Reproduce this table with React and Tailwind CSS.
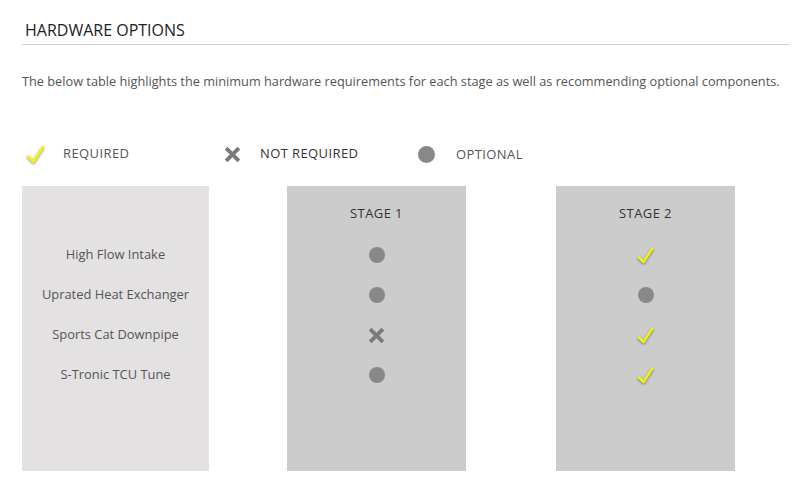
import { useState } from "react";

// yellow tick with a soft grey shadow, like the original sprite
function Check({ size = 18 }) {
  return (
    <svg width={size} height={size} viewBox="0 0 20 20" className="drop-shadow-[0_1px_1px_rgba(0,0,0,0.45)]">
      <polyline points="3,12 8,17 17,3" fill="none" stroke="#f4f40a" strokeWidth="2.6" strokeLinecap="round" strokeLinejoin="round" />
    </svg>
  );
}

function Cross({ size = 16 }) {
  return (
    <svg width={size} height={size} viewBox="0 0 16 16">
      <path d="M2 2 L14 14 M14 2 L2 14" stroke="#7a7a7a" strokeWidth="3.6" strokeLinecap="butt" />
    </svg>
  );
}

function Dot() {
  return <div className="w-4 h-4 rounded-full bg-[#888888]" />;
}

const ITEMS = [
  { name: "High Flow Intake", s1: "opt", s2: "req" },
  { name: "Uprated Heat Exchanger", s1: "opt", s2: "opt" },
  { name: "Sports Cat Downpipe", s1: "no", s2: "req" },
  { name: "S-Tronic TCU Tune", s1: "opt", s2: "req" },
];

function Mark({ kind }) {
  if (kind === "req") return <Check size={19} />;
  if (kind === "no") return <Cross size={17} />;
  return <Dot />;
}

function Column({ title, className, children }) {
  return (
    <div className={"flex flex-col items-center pt-[19px] h-[285px] " + className}>
      <div className="h-4 mb-[14px] text-[13px] leading-4 tracking-[0.4px] text-[#333]">{title}</div>
      {children}
    </div>
  );
}

export default function App() {
  const [items] = useState(ITEMS);

  return (
    <div className="w-[812px] h-[503px] bg-white font-['Open_Sans',sans-serif] px-[22px] pt-[20px]">
      <div className="w-[768px] border-b border-[#cfcfcf] pb-[4px] pl-[3px]">
        <h2 className="text-[16px] leading-5 text-[#222]">HARDWARE OPTIONS</h2>
      </div>

      <p className="mt-[28px] text-[12.75px] leading-4 text-[#555]">
        The below table highlights the minimum hardware requirements for each stage as well as recommending optional components.
      </p>

      <div className="mt-[55px] flex items-center h-5 text-[13px] tracking-[0.4px] text-[#555]">
        <div className="w-[41px] pl-[3px] flex items-center">
          <Check size={21} />
        </div>
        <span className="w-[159px]">REQUIRED</span>
        <div className="w-[38px] flex items-center pl-[2px]">
          <Cross size={17} />
        </div>
        <span className="w-[156px] text-[#333]">NOT REQUIRED</span>
        <div className="w-[40px] pl-[2px] flex items-center">
          <div className="w-[17px] h-[17px] rounded-full bg-[#888888]" />
        </div>
        <span className="pt-[2px]">OPTIONAL</span>
      </div>

      <div className="mt-[22px] flex">
        <Column title="" className="w-[187px] bg-[#e3e1e2]">
          {items.map((it) => (
            <div key={it.name} className="h-10 flex items-center text-[12.9px] text-[#555]">
              {it.name}
            </div>
          ))}
        </Column>
        <Column title="STAGE 1" className="w-[179px] ml-[78px] bg-[#cccccc]">
          {items.map((it) => (
            <div key={it.name} className="h-10 flex items-center">
              <Mark kind={it.s1} />
            </div>
          ))}
        </Column>
        <Column title="STAGE 2" className="w-[179px] ml-[90px] bg-[#cccccc]">
          {items.map((it) => (
            <div key={it.name} className="h-10 flex items-center">
              <Mark kind={it.s2} />
            </div>
          ))}
        </Column>
      </div>
    </div>
  );
}
